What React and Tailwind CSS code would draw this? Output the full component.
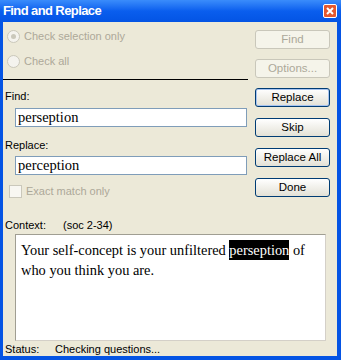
import React from 'react';

const ui = { fontFamily: '"Liberation Sans", Arial, sans-serif' };
const serif = { fontFamily: '"Liberation Serif", "Times New Roman", serif' };

const Radio = ({ checked, label }) => (
  <div className="flex items-center h-[13px] pl-[4px]">
    <span className="w-[13px] h-[13px] rounded-full border border-[#cac8bb] bg-[#f4f3ee] flex items-center justify-center">
      {checked && <span className="w-[5px] h-[5px] rounded-full bg-[#cac8bb]" />}
    </span>
    <span className="ml-[4px] text-[11px] leading-[13px] text-[#aca899]">{label}</span>
  </div>
);

const Btn = ({ children, disabled, isDefault }) => (
  <div
    className={
      'w-[75px] h-[19px] rounded-[3px] flex items-center justify-center text-[11.5px] leading-none ' +
      (disabled
        ? 'border border-[#c9c7ba] bg-[#f5f4ea] text-[#aca899]'
        : isDefault
        ? 'border border-[#003c74] bg-gradient-to-b from-white to-[#e3e1d6] text-black shadow-[inset_0_0_0_1px_#a8c4f0]'
        : 'border border-[#003c74] bg-gradient-to-b from-white to-[#e3e1d6] text-black')
    }
  >
    {children}
  </div>
);

export default function App() {
  return (
    <div className="w-[341px] h-[360px] flex flex-col overflow-hidden" style={ui}>
      {/* title bar */}
      <div className="h-[22px] flex items-center justify-between pl-[3px] pr-[4px] bg-gradient-to-b from-[#3a8cfb] via-[#0a5eee] to-[#0454e4]">
        <span className="text-white font-bold text-[13px] tracking-[-0.6px]">Find and Replace</span>
        <span className="w-[14px] h-[14px] rounded-[2px] border border-white bg-[#e4582e] flex items-center justify-center">
          <svg width="8" height="8" viewBox="0 0 8 8">
            <path d="M1 1 L7 7 M7 1 L1 7" stroke="white" strokeWidth="2" />
          </svg>
        </span>
      </div>

      {/* body */}
      <div className="flex-1 flex flex-col bg-[#ece9d8] border-l-[3px] border-r-[4px] border-b-[4px] border-[#0454e4]">
        <div className="flex">
          {/* left column */}
          <div className="w-[245px] flex flex-col">
            <div className="mt-[8px]">
              <Radio checked label="Check selection only" />
            </div>
            <div className="mt-[12px]">
              <Radio label="Check all" />
            </div>
            <div className="mt-[11px] h-px bg-black" />
            <div className="mt-[10px] pl-[2px] text-[11px] leading-[13px]">Find:</div>
            <div className="mt-[5px] ml-[12px] w-[232px] h-[19px] border border-[#7f9db9] bg-white flex items-center pl-[2px] text-[14.5px]" style={serif}>
              perseption
            </div>
            <div className="mt-[12px] pl-[2px] text-[11px] leading-[13px]">Replace:</div>
            <div className="mt-[4px] ml-[12px] w-[232px] h-[19px] border border-[#7f9db9] bg-white flex items-center pl-[2px] text-[14.5px]" style={serif}>
              perception
            </div>
            <div className="mt-[10px] ml-[6px] flex items-center h-[13px]">
              <span className="w-[13px] h-[13px] border border-[#cac8bb] bg-[#f8f7f2]" />
              <span className="ml-[4px] text-[11px] text-[#aca899]">Exact match only</span>
            </div>
          </div>

          {/* right column */}
          <div className="ml-[7px] mt-[8px] flex flex-col gap-[10px]">
            <Btn disabled>Find</Btn>
            <Btn disabled>Options...</Btn>
            <Btn isDefault>Replace</Btn>
            <div className="mt-[1px]"><Btn>Skip</Btn></div>
            <div className="mt-[1px]"><Btn>Replace All</Btn></div>
            <div className="mt-[1px]"><Btn>Done</Btn></div>
          </div>
        </div>

        {/* context */}
        <div className="mt-[21px] flex pl-[2px] text-[11px] leading-[13px]">
          <span className="w-[58px]">Context:</span>
          <span>(soc 2-34)</span>
        </div>
        <div className="mt-[2px] ml-[12px] w-[311px] h-[107px] border border-[#a09e92] border-r-[#d4d0c8] border-b-[#d4d0c8] bg-white pl-[5px] pt-[5px] text-[14.4px] leading-[20px]" style={serif}>
          <div className="flex whitespace-pre">
            <span>Your self-concept is your unfiltered </span>
            <span className="bg-black text-white">perseption</span>
            <span> of</span>
          </div>
          <div>who you think you are.</div>
        </div>
        <div className="mt-[2px] flex pl-[2px] text-[11px] leading-[13px]">
          <span className="w-[50px]">Status:</span>
          <span>Checking questions...</span>
        </div>
      </div>
    </div>
  );
}
